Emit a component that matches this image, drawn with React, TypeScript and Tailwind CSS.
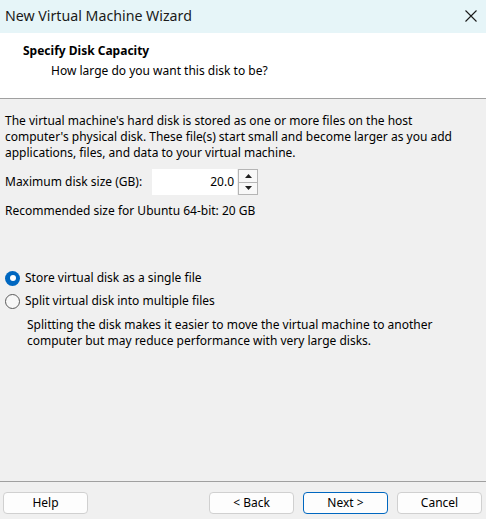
import React from "react";

function Btn({ label, primary }: { label: string; primary?: boolean }) {
  return (
    <button
      className={
        primary
          ? "w-[85px] h-[22px] rounded-[4px] border border-[#0067c0] bg-[#fdfdfd] text-[12px] text-black flex items-center justify-center"
          : "w-[85px] h-[22px] rounded-[4px] border border-[#d0d0d0] bg-[#fdfdfd] text-[12px] text-black flex items-center justify-center"
      }
    >
      {label}
    </button>
  );
}

export default function App() {
  return (
    <div
      className="w-[486px] h-[519px] bg-[#f0f0f0] flex flex-col text-black overflow-hidden"
      style={{ fontFamily: '"Noto Sans", "Open Sans", sans-serif' }}
    >
      {/* Title bar */}
      <div className="h-[33px] bg-[#e6f5f8] flex items-center justify-between pl-[5px] pr-[9px]">
        <span className="text-[14.2px] leading-none text-[#1a1a1a] -mt-[1px]">New Virtual Machine Wizard</span>
        <svg width="12" height="12" viewBox="0 0 12 12" className="-mt-[2px]">
          <path d="M0.5 0.5 L11.5 11.5 M11.5 0.5 L0.5 11.5" stroke="#1a1a1a" strokeWidth="1.1" fill="none" />
        </svg>
      </div>

      {/* Header */}
      <div className="h-[66px] bg-white border-b border-[#a0a0a0] pt-[10px]">
        <div className="pl-[23px] text-[12px] font-bold leading-[16px]">Specify Disk Capacity</div>
        <div className="pl-[51px] mt-[4px] text-[12px] leading-[16px]">How large do you want this disk to be?</div>
      </div>

      {/* Body */}
      <div className="flex-1 pt-[14px] px-[5px] text-[12px] leading-[16px]">
        <p>
          The virtual machine's hard disk is stored as one or more files on the host
          <br />
          computer's physical disk. These file(s) start small and become larger as you add
          <br />
          applications, files, and data to your virtual machine.
        </p>

        <div className="mt-[8px] flex items-center h-[26px]">
          <span className="w-[147px]">Maximum disk size (GB):</span>
          <div className="w-[85px] h-[26px] bg-white flex items-center justify-end pr-[3px]">
            <span className="text-[12px]">20.0</span>
          </div>
          <div className="ml-[1px] w-[20px] h-[26px] flex flex-col border border-[#b5b5b5] bg-[#f0f0f0]">
            <div className="flex-1 flex items-center justify-center border-b border-[#b5b5b5] bg-[#f8f8f8]">
              <svg width="7" height="4" viewBox="0 0 7 4"><path d="M3.5 0 L7 4 L0 4 Z" fill="#202020" /></svg>
            </div>
            <div className="flex-1 flex items-center justify-center bg-[#f8f8f8]">
              <svg width="7" height="4" viewBox="0 0 7 4"><path d="M0 0 L7 0 L3.5 4 Z" fill="#202020" /></svg>
            </div>
          </div>
        </div>

        <div className="mt-[8px]">Recommended size for Ubuntu 64-bit: 20 GB</div>

        <div className="mt-[51px] flex items-center h-[16px]">
          <span className="w-[15px] h-[15px] rounded-full bg-[#0067c0] flex items-center justify-center">
            <span className="w-[6px] h-[6px] rounded-full bg-white" />
          </span>
          <span className="ml-[5px]">Store virtual disk as a single file</span>
        </div>
        <div className="mt-[7px] flex items-center h-[16px]">
          <span className="w-[15px] h-[15px] rounded-full border border-[#5a5a5a] bg-[#f7f7f7]" />
          <span className="ml-[5px]">Split virtual disk into multiple files</span>
        </div>
        <p className="mt-[8px] pl-[22px]">
          Splitting the disk makes it easier to move the virtual machine to another
          <br />
          computer but may reduce performance with very large disks.
        </p>
      </div>

      {/* Footer */}
      <div className="h-[38px] border-t border-[#a0a0a0] flex items-start pt-[10px] pl-[3px] pr-[4px]">
        <Btn label="Help" />
        <div className="flex-1" />
        <div className="flex gap-[9px]">
          <Btn label="< Back" />
          <Btn label="Next >" primary />
          <Btn label="Cancel" />
        </div>
      </div>
    </div>
  );
}
